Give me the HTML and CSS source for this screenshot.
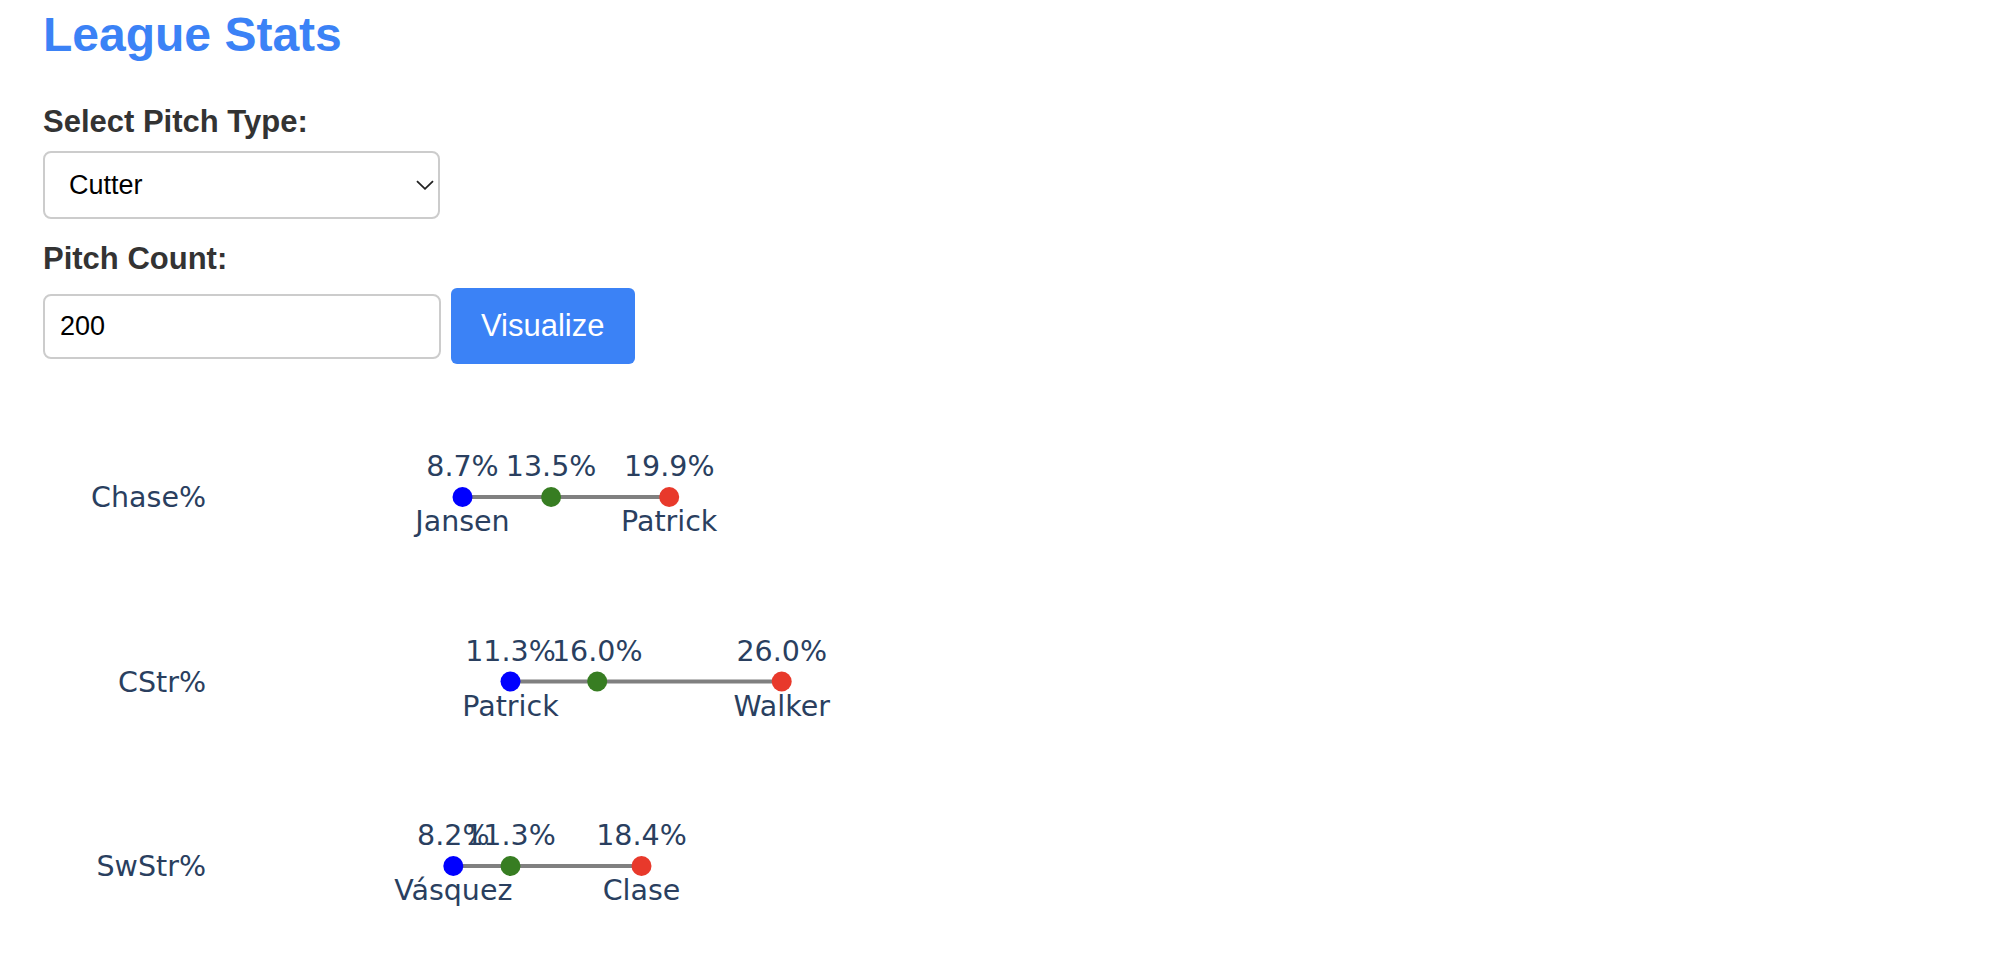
FILE: index.html
```html
<!DOCTYPE html>
<html lang="en">
<head>
    <meta charset="UTF-8">
    <meta name="viewport" content="width=device-width, initial-scale=1.0">
    <title>League Stats</title>
    <link rel="stylesheet" href="styles.css">
</head>
<body>
    <div class="container">
        <h1>League Stats</h1>

        <label class="field-label" for="pitch-type">Select Pitch Type:</label>
        <div class="select-wrap">
            <select id="pitch-type">
                <option>Cutter</option>
                <option>Four-Seam</option>
                <option>Slider</option>
                <option>Curveball</option>
                <option>Changeup</option>
            </select>
            <svg class="chevron" width="18" height="10" viewBox="0 0 18 10">
                <path d="M1 1.2 L9 8.8 L17 1.2" fill="none" stroke="#222" stroke-width="1.8"/>
            </svg>
        </div>

        <label class="field-label" for="pitch-count">Pitch Count:</label>
        <div class="count-row">
            <input type="number" id="pitch-count" value="200">
            <button>Visualize</button>
        </div>

        <svg class="chart" width="900" height="540" viewBox="0 0 900 540">
            <!-- Chase% -->
            <g transform="translate(0,113)">
                <text class="axis-label" x="163" y="10">Chase%</text>
                <line x1="419.5" y1="0" x2="626.2" y2="0" class="range"/>
                <circle cx="419.5" cy="0" r="10" class="min"/>
                <circle cx="508.1" cy="0" r="10" class="avg"/>
                <circle cx="626.2" cy="0" r="10" class="max"/>
                <text class="val" x="419.5" y="-21">8.7%</text>
                <text class="val" x="508.1" y="-21">13.5%</text>
                <text class="val" x="626.2" y="-21">19.9%</text>
                <text class="val" x="419.5" y="34">Jansen</text>
                <text class="val" x="626.2" y="34">Patrick</text>
            </g>
            <!-- CStr% -->
            <g transform="translate(0,297.5)">
                <text class="axis-label" x="163" y="10">CStr%</text>
                <line x1="467.5" y1="0" x2="738.7" y2="0" class="range"/>
                <circle cx="467.5" cy="0" r="10" class="min"/>
                <circle cx="554.2" cy="0" r="10" class="avg"/>
                <circle cx="738.7" cy="0" r="10" class="max"/>
                <text class="val" x="467.5" y="-21">11.3%</text>
                <text class="val" x="554.2" y="-21">16.0%</text>
                <text class="val" x="738.7" y="-21">26.0%</text>
                <text class="val" x="467.5" y="34">Patrick</text>
                <text class="val" x="738.7" y="34">Walker</text>
            </g>
            <!-- SwStr% -->
            <g transform="translate(0,482)">
                <text class="axis-label" x="163" y="10">SwStr%</text>
                <line x1="410.3" y1="0" x2="598.5" y2="0" class="range"/>
                <circle cx="410.3" cy="0" r="10" class="min"/>
                <circle cx="467.5" cy="0" r="10" class="avg"/>
                <circle cx="598.5" cy="0" r="10" class="max"/>
                <text class="val" x="410.3" y="-21">8.2%</text>
                <text class="val" x="467.5" y="-21">11.3%</text>
                <text class="val" x="598.5" y="-21">18.4%</text>
                <text class="val" x="410.3" y="34">Vásquez</text>
                <text class="val" x="598.5" y="34">Clase</text>
            </g>
        </svg>
    </div>
</body>
</html>
```

FILE: styles.css
```css
body {
    font-family: 'Liberation Sans', Arial, sans-serif;
    margin: 0;
    color: #333;
    background: #fff;
}

.container {
    padding: 7px 43px 0;
}

h1 {
    font-size: 48px;
    line-height: 56px;
    color: #3b82f6;
    margin: 0 0 41px;
}

.field-label {
    display: block;
    font-size: 31px;
    line-height: 36px;
    font-weight: bold;
    margin-bottom: 11px;
}

.select-wrap {
    position: relative;
    width: 397px;
    margin-bottom: 22px;
}

.select-wrap select {
    appearance: none;
    -webkit-appearance: none;
    display: block;
    width: 100%;
    height: 68px;
    padding: 0 40px 0 24px;
    font-family: 'Liberation Sans', Arial, sans-serif;
    font-size: 27px;
    color: #000;
    background: #fff;
    border: 2px solid #ccc;
    border-radius: 8px;
}

.select-wrap .chevron {
    position: absolute;
    left: 373px;
    top: 29px;
    pointer-events: none;
}

.count-row {
    display: flex;
    align-items: center;
    gap: 10px;
}

.count-row input {
    box-sizing: border-box;
    width: 398px;
    height: 65px;
    padding: 0 15px;
    font-family: 'Liberation Sans', Arial, sans-serif;
    font-size: 27px;
    color: #000;
    border: 2px solid #ccc;
    border-radius: 8px;
    -moz-appearance: textfield;
}

.count-row input::-webkit-outer-spin-button,
.count-row input::-webkit-inner-spin-button {
    -webkit-appearance: none;
    margin: 0;
}

.count-row button {
    height: 76px;
    padding: 0 30px;
    font-family: 'Liberation Sans', Arial, sans-serif;
    font-size: 31px;
    color: #fff;
    background: #3b82f6;
    border: none;
    border-radius: 6px;
    cursor: pointer;
}

.chart {
    display: block;
    margin-top: 20px;
    font-family: 'DejaVu Sans', Verdana, sans-serif;
    font-size: 28.5px;
}

.chart text {
    fill: #2a3f5f;
}

.chart .axis-label {
    text-anchor: end;
}

.chart .val {
    text-anchor: middle;
}

.chart .range {
    stroke: #808080;
    stroke-width: 4;
}

.chart .min {
    fill: #0000ff;
}

.chart .avg {
    fill: #377d22;
}

.chart .max {
    fill: #e8392b;
}
```
